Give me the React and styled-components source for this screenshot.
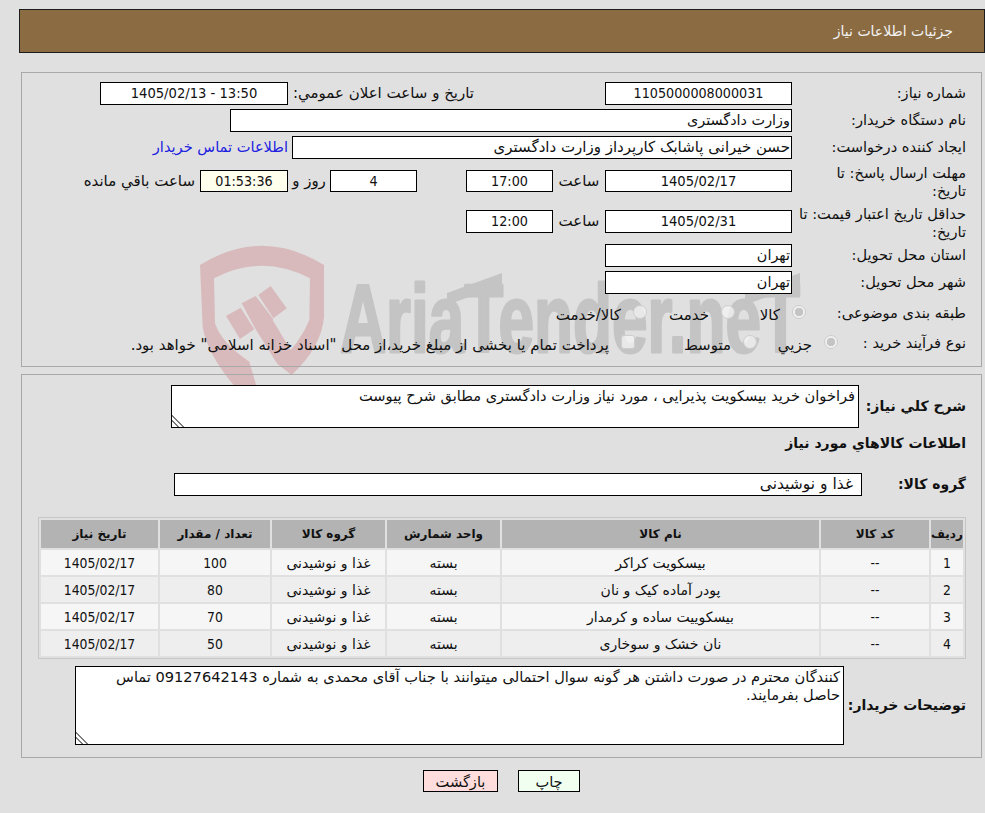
import React from "react";
import styled, { createGlobalStyle } from "styled-components";

const Global = createGlobalStyle`
  html, body {
    margin: 0;
    padding: 0;
  }
  html {
    background: #e0e0e0;
  }
  body {
    font-family: "DejaVu Sans", sans-serif;
    font-size: 14.6px;
    color: #111;
  }
`;

const Page = styled.div`
  position: relative;
  width: 985px;
  height: 813px;
  padding-top: 9px;
  box-sizing: border-box;
  overflow: hidden;
`;

const Shield = styled.svg`
  position: absolute;
  left: 190px;
  top: 240px;
  width: 240px;
  height: 160px;
  z-index: -1;
`;

const Brand = styled.svg`
  position: absolute;
  left: 330px;
  top: 260px;
  width: 490px;
  height: 110px;
  z-index: -1;
`;

const Header = styled.div`
  margin-left: 19px;
  width: 966px;
  height: 44px;
  box-sizing: border-box;
  background: #8b6b42;
  border: 1px solid #1c1c1c;
  color: #f2f2f2;
  font-size: 14px;
  line-height: 42px;
  padding-right: 31px;
`;

const Panel = styled.div`
  margin: ${(p) => p.$top}px 3px 0 21px;
  border: 1px solid #a8a8a8;
  box-sizing: border-box;
  height: ${(p) => p.$h}px;
  padding-top: ${(p) => p.$pad}px;
`;

const Row = styled.div`
  display: flex;
  align-items: flex-start;
  height: ${(p) => p.$h || 22}px;
  margin-top: ${(p) => p.$gap ?? 5}px;
  padding-right: 15px;
`;

const Label = styled.div`
  flex: 0 0 ${(p) => p.$w || 174}px;
  line-height: 18px;
  padding-top: ${(p) => p.$pt ?? 2}px;
  font-size: ${(p) => (p.$bold ? "14px" : "inherit")};
  font-weight: ${(p) => (p.$bold ? 700 : 400)};
  white-space: nowrap;
  box-sizing: border-box;
`;

const Controls = styled.div`
  display: flex;
  align-items: flex-start;
  padding-top: ${(p) => p.$pt || 0}px;
`;

const Field = styled.div`
  flex: none;
  width: ${(p) => p.$w}px;
  height: ${(p) => p.$h || 23}px;
  box-sizing: border-box;
  border: 1px solid #000;
  background: ${(p) => p.$bg || "#fff"};
  font-size: ${(p) => p.$size || 14.4}px;
  line-height: 20px;
  text-align: ${(p) => (p.$right ? "right" : "center")};
  padding: 0 ${(p) => p.$inset || 1}px 0 1px;
  margin-right: ${(p) => p.$start || 0}px;
  white-space: nowrap;
  overflow: hidden;
`;

const Digits = styled.span`
  font-family: "DejaVu Sans Condensed", "DejaVu Sans", sans-serif;
  font-size: ${(p) => p.$size || 14.2}px;
`;

const Caption = styled.div`
  flex: none;
  width: ${(p) => p.$w}px;
  margin-right: ${(p) => p.$start || 0}px;
  font-size: 15px;
  line-height: 22px;
  text-align: ${(p) => (p.$center ? "center" : "right")};
  white-space: nowrap;
`;

const ContactLink = styled.a`
  color: #2020e0;
  text-decoration: none;
  line-height: 22px;
  margin-right: 4px;
  white-space: nowrap;
`;

const Options = styled.div`
  display: flex;
  align-items: center;
  padding-top: 4px;
`;

const Option = styled.label`
  flex: none;
  display: flex;
  align-items: center;
  gap: 12px;
  width: ${(p) => p.$w}px;
  font-size: 15px;
  white-space: nowrap;
`;

const Radio = styled.input.attrs({ type: "radio", disabled: true })`
  appearance: none;
  flex: none;
  margin: 0;
  width: 14px;
  height: 14px;
  box-sizing: border-box;
  border: 1px solid #cdcdcd;
  border-radius: ${(p) => (p.$square ? "3px" : "50%")};
  background: rgba(244, 244, 244, 0.75);
  position: relative;
  top: -3px;
  &:checked {
    background: radial-gradient(circle, #c4c4c4 0 4px, #f0f0f0 4.5px);
  }
`;

const Area = styled.textarea.attrs({ readOnly: true })`
  display: block;
  flex: none;
  width: ${(p) => p.$w}px;
  height: ${(p) => p.$h}px;
  box-sizing: border-box;
  border: 1px solid #000;
  border-radius: 0;
  outline: none;
  margin: 0;
  padding: 1px 3px;
  background: #fff;
  color: #111;
  font: inherit;
  line-height: 18px;
  resize: both;
  &::-webkit-resizer {
    background: linear-gradient(
      45deg,
      transparent 0 17%,
      #7c7c7c 17% 24%,
      transparent 24% 35%,
      #7c7c7c 35% 42%,
      transparent 42%
    );
  }
`;

const Heading = styled.div`
  margin: 5px 15px 0 0;
  height: 20px;
  font-size: 14px;
  line-height: 20px;
  font-weight: 700;
`;

const Goods = styled.table`
  width: 928px;
  margin: 21px 15px 0 0;
  table-layout: fixed;
  border-collapse: separate;
  border-spacing: 2px;
  border: 1px solid #c6c6c6;
  font-size: 14px;
`;

const Th = styled.th`
  width: ${(p) => p.$w}px;
  height: 28px;
  padding: 0;
  background: #b3b3b3;
  font-size: 12px;
  font-weight: 700;
  text-align: center;
`;

const Tr = styled.tr`
  background: ${(p) => (p.$even ? "#eeeeee" : "#f6f6f6")};
`;

const Td = styled.td`
  height: 25px;
  padding: 0;
  text-align: center;
`;

const Actions = styled.div`
  display: flex;
  gap: 20px;
  margin-top: 12px;
  padding-right: 405px;
`;

const Action = styled.button`
  width: ${(p) => p.$w}px;
  height: 22px;
  padding: 0;
  box-sizing: border-box;
  border: 1px solid #000;
  border-radius: 0;
  background: ${(p) => p.$bg};
  color: #111;
  font: inherit;
`;

const goods = [
  ["1", "--", "بیسکویت کراکر", "بسته", "غذا و نوشیدنی", "100", "1405/02/17"],
  ["2", "--", "پودر آماده کیک و نان", "بسته", "غذا و نوشیدنی", "80", "1405/02/17"],
  ["3", "--", "بیسکوییت ساده و کرمدار", "بسته", "غذا و نوشیدنی", "70", "1405/02/17"],
  ["4", "--", "نان خشک و سوخاری", "بسته", "غذا و نوشیدنی", "50", "1405/02/17"],
];

const columns = [
  ["ردیف", 32],
  ["کد کالا", 108],
  ["نام کالا", 317],
  ["واحد شمارش", 113],
  ["گروه کالا", 113],
  ["تعداد / مقدار", 110],
  ["تاریخ نیاز", 117],
];

export default function App() {
  return (
    <Page dir="rtl">
      <Global />
      <Shield viewBox="0 0 720 480" aria-hidden="true">
        <path
          fill="#d9babc"
          fillRule="evenodd"
          d="M30 75 Q215 -40 402 75 L402 230 Q395 320 305 405 L262 372 Q330 310 358 240 L360 115 Q215 40 72 115 L75 250 Q95 310 178 365 L200 440 L135 440 Q50 340 38 260 Z"
        />
        <path fill="#d9babc" d="M108 228 L152 203 L193 268 L150 297 Z" />
        <path fill="#d9babc" d="M155 190 L197 168 L250 238 L248 240 L305 335 L262 372 L195 265 Z" />
        <path fill="#d9babc" d="M205 165 L242 138 L290 205 L250 235 Z" />
      </Shield>
      <Brand viewBox="330 260 490 110" aria-hidden="true">
        <text
          x="340"
          y="352"
          textLength="460"
          lengthAdjust="spacingAndGlyphs"
          fontFamily="Liberation Sans"
          fontWeight="700"
          fontSize="97"
          fill="#c4c4c4"
          stroke="#c4c4c4"
          strokeWidth="3"
          strokeLinejoin="round"
          direction="ltr"
        >
          AriaTender.neT
        </text>
        <path fill="#c4c4c4" d="M447 293 L502 273 L502 285 L447 305 Z" />
        <path fill="#c4c4c4" d="M745 293 L800 273 L800 285 L745 305 Z" />
      </Brand>

      <Header>جزئیات اطلاعات نیاز</Header>

      <Panel $top={19} $h={295} $pad={9}>
        <Row $gap={0}>
          <Label>شماره نیاز:</Label>
          <Controls>
            <Field $w={187}><Digits>1105000008000031</Digits></Field>
            <Caption $w={181} $start={131}>تاریخ و ساعت اعلان عمومي:</Caption>
            <Field $w={188} $start={5}><Digits $size={14.6}>13:50 - 1405/02/13</Digits></Field>
          </Controls>
        </Row>
        <Row>
          <Label>نام دستگاه خریدار:</Label>
          <Controls>
            <Field $w={562} $right>وزارت دادگستری</Field>
          </Controls>
        </Row>
        <Row>
          <Label>ایجاد کننده درخواست:</Label>
          <Controls>
            <Field $w={500} $right $size={15}>حسن خیرانی پاشابک کارپرداز وزارت دادگستری</Field>
            <ContactLink href="#contact">اطلاعات تماس خریدار</ContactLink>
          </Controls>
        </Row>
        <Row $h={37}>
          <Label $pt={1}>مهلت ارسال پاسخ: تا<br />تاریخ:</Label>
          <Controls $pt={7}>
            <Field $w={187} $h={22}><Digits $size={14.6}>1405/02/17</Digits></Field>
            <Caption $w={52} $center>ساعت</Caption>
            <Field $w={87} $h={22}><Digits>17:00</Digits></Field>
            <Field $w={87} $h={22} $start={49}><Digits>4</Digits></Field>
            <Caption $w={42} $center>روز و</Caption>
            <Field $w={88} $h={22} $bg="#ffffee"><Digits>01:53:36</Digits></Field>
            <Caption $w={115} $start={5}>ساعت باقي مانده</Caption>
          </Controls>
        </Row>
        <Row $h={34}>
          <Label $pt={0}>حداقل تاریخ اعتبار قیمت: تا<br />تاریخ:</Label>
          <Controls $pt={5}>
            <Field $w={187}><Digits $size={14.6}>1405/02/31</Digits></Field>
            <Caption $w={52} $center>ساعت</Caption>
            <Field $w={87}><Digits>12:00</Digits></Field>
          </Controls>
        </Row>
        <Row>
          <Label>استان محل تحویل:</Label>
          <Controls>
            <Field $w={187} $right>تهران</Field>
          </Controls>
        </Row>
        <Row>
          <Label>شهر محل تحویل:</Label>
          <Controls>
            <Field $w={187} $right>تهران</Field>
          </Controls>
        </Row>
        <Row $gap={9}>
          <Label $w={160}>طبقه بندی موضوعی:</Label>
          <Options>
            <Option $w={71}><Radio name="kind" defaultChecked />کالا</Option>
            <Option $w={88}><Radio name="kind" />خدمت</Option>
            <Option $w={100}><Radio name="kind" />کالا/خدمت</Option>
          </Options>
        </Row>
        <Row $gap={8}>
          <Label $w={128}>نوع فرآیند خرید :</Label>
          <Options>
            <Option $w={81}><Radio name="process" defaultChecked />جزيي</Option>
            <Option $w={122}><Radio name="process" />متوسط</Option>
            <Option $w={510}>
              <Radio name="process" $square />
              پرداخت تمام یا بخشی از مبلغ خرید،از محل "اسناد خزانه اسلامی" خواهد بود.
            </Option>
          </Options>
        </Row>
      </Panel>

      <Panel $top={7} $h={384} $pad={10}>
        <Row $gap={0} $h={43}>
          <Label $bold $w={107} $pt={12}>شرح کلي نیاز:</Label>
          <Area $w={688} $h={43} defaultValue="فراخوان خرید بیسکویت پذیرایی ، مورد نیاز وزارت دادگستری مطابق شرح پیوست" />
        </Row>
        <Heading>اطلاعات کالاهاي مورد نیاز</Heading>
        <Row $gap={20} $h={23}>
          <Label $bold $w={104} $pt={2}>گروه کالا:</Label>
          <Field $w={688} $h={23} $right $inset={8} $size={15.5}>غذا و نوشیدنی</Field>
        </Row>
        <Goods>
          <thead>
            <tr>
              {columns.map(([title, w]) => (
                <Th key={title} $w={w}>{title}</Th>
              ))}
            </tr>
          </thead>
          <tbody>
            {goods.map((row, i) => (
              <Tr key={row[0]} $even={i % 2 === 1}>
                {row.map((cell, j) => (
                  <Td key={j}>{/[\u0600-\u06ff]/.test(cell) ? cell : <Digits $size={13.8}>{cell}</Digits>}</Td>
                ))}
              </Tr>
            ))}
          </tbody>
        </Goods>
        <Row $gap={7} $h={79}>
          <Label $bold $w={122} $pt={30}>توضیحات خریدار:</Label>
          <Area $w={769} $h={79} defaultValue="کنندگان محترم در صورت داشتن هر گونه سوال احتمالی میتوانند با جناب آقای محمدی به شماره 09127642143 تماس حاصل بفرمایند." />
        </Row>
      </Panel>

      <Actions>
        <Action $w={62} $bg="#f0fff0">چاپ</Action>
        <Action $w={75} $bg="#ffdddd">بازگشت</Action>
      </Actions>
    </Page>
  );
}
